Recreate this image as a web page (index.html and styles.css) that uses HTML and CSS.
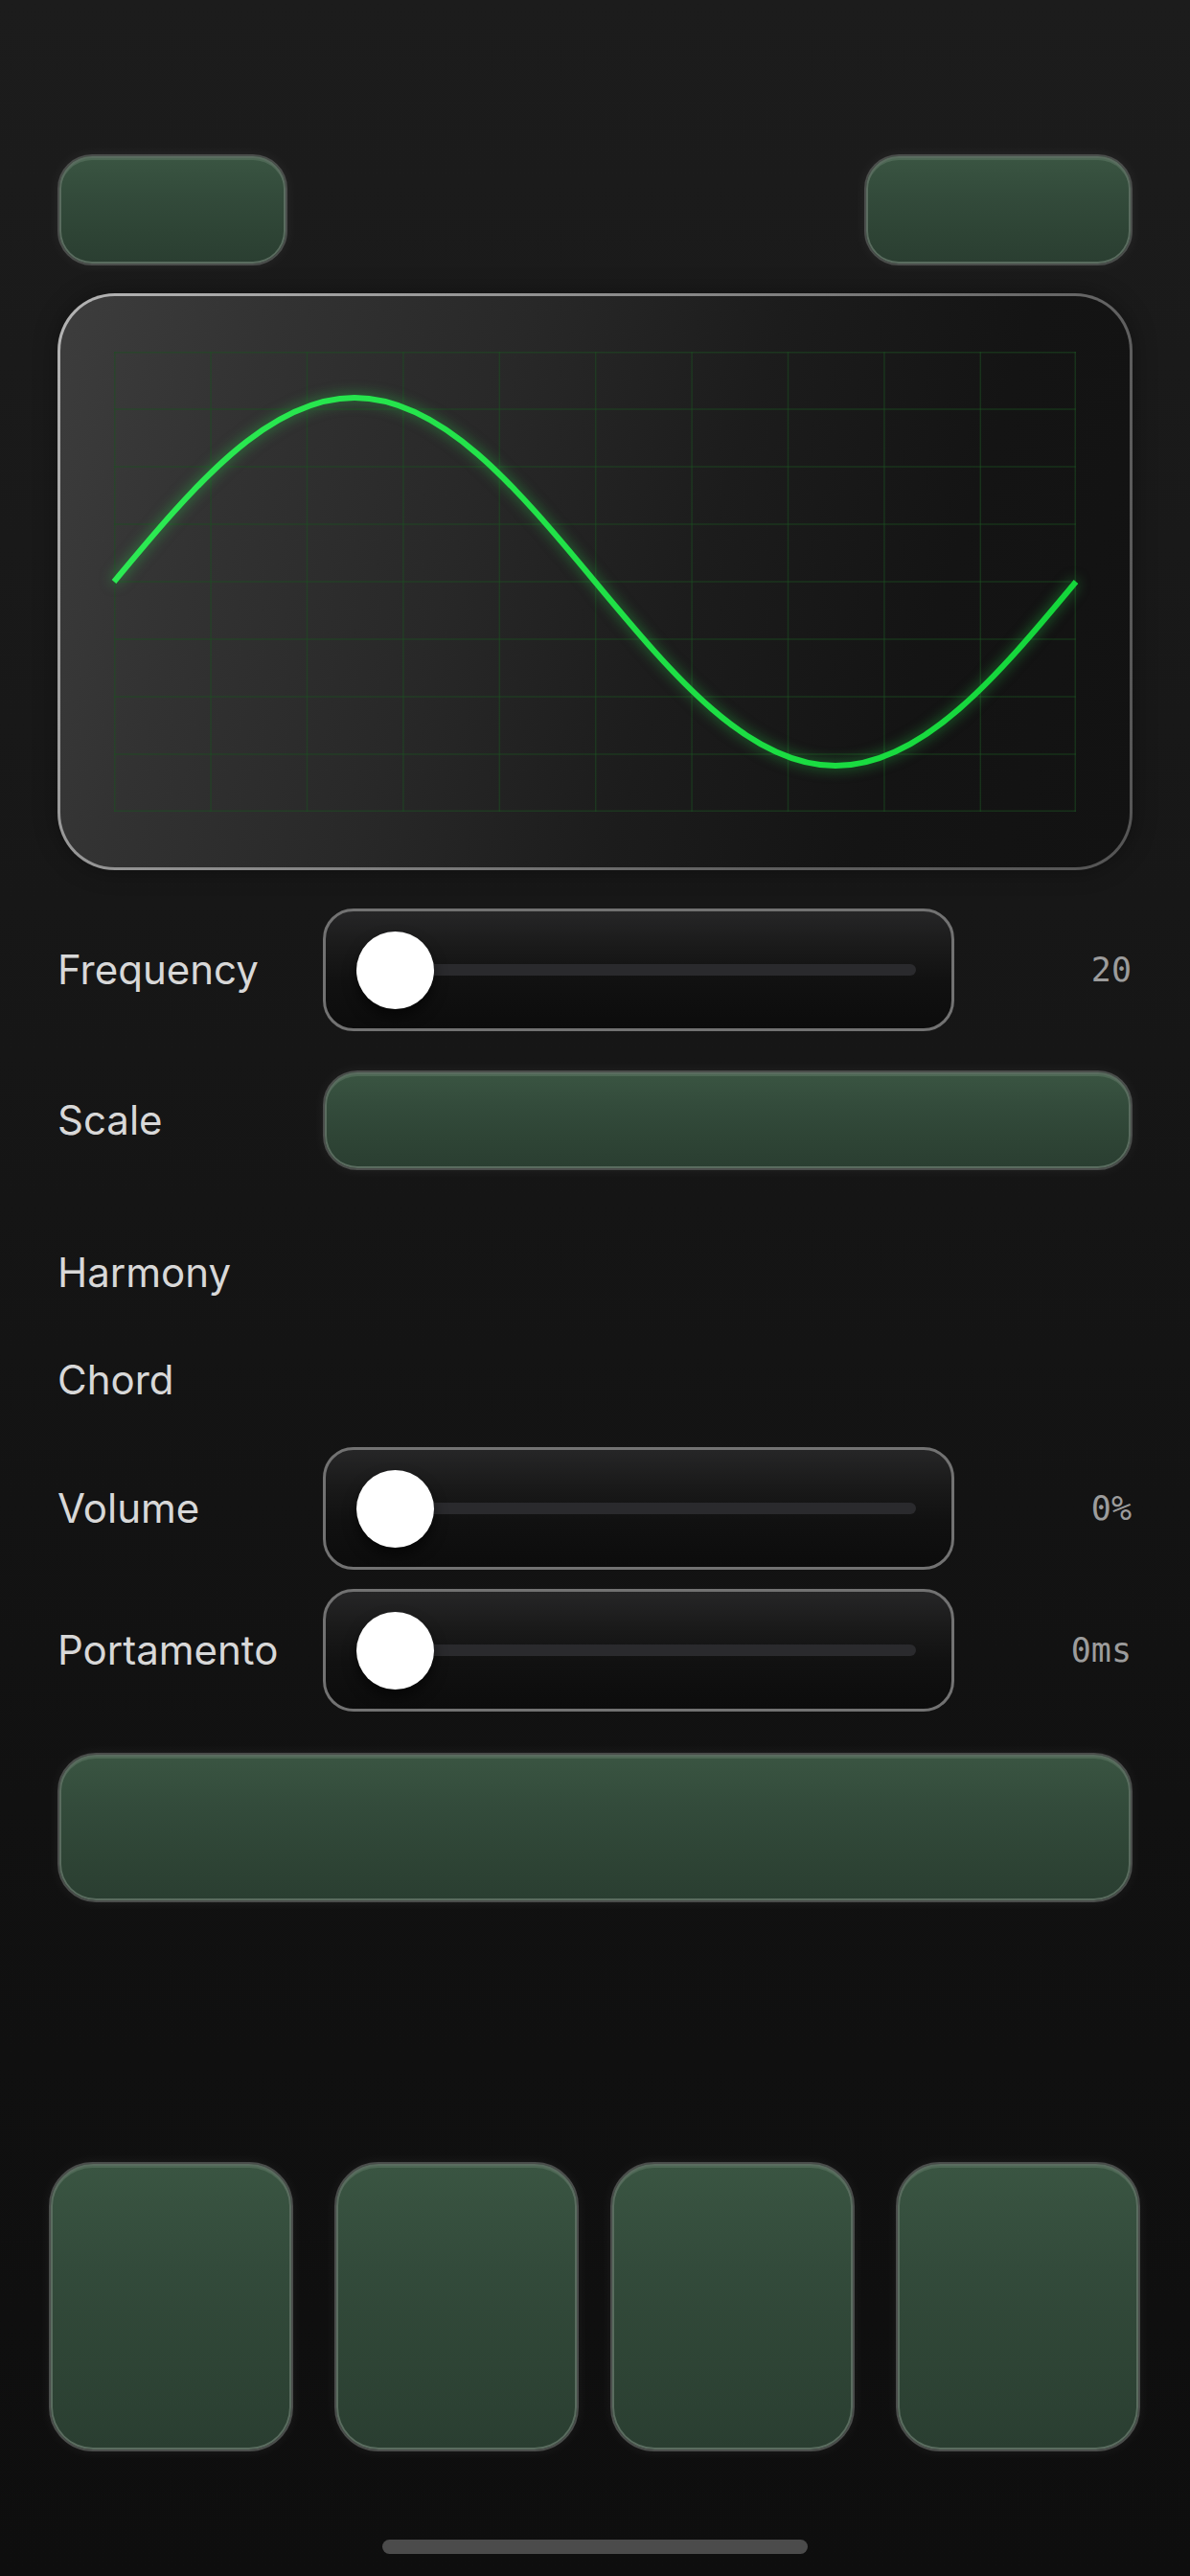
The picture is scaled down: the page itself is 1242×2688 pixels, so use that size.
FILE: index.html
```html
<!DOCTYPE html>
<html lang="en">
<head>
<meta charset="utf-8">
<title>Synth</title>
<link rel="stylesheet" href="styles.css">
</head>
<body>
<div class="app">
  <div class="topbar">
    <div class="gbtn top-left"></div>
    <div class="gbtn top-right"></div>
  </div>

  <div class="scope">
    <svg class="scope-svg" width="1004" height="480" viewBox="0 0 1004 480">
      <defs>
        <linearGradient id="wave" x1="0" y1="0" x2="1" y2="0">
          <stop offset="0" stop-color="#2cea53"/>
          <stop offset="1" stop-color="#14d73b"/>
        </linearGradient>
      </defs>
      <g class="grid">
        <path d="M0.75 0V480M101.1 0V480M201.5 0V480M301.9 0V480M402.3 0V480M502.7 0V480M603.1 0V480M703.5 0V480M803.9 0V480M904.3 0V480M1003.25 0V480"/>
        <path d="M0 0.75H1004M0 60H1004M0 120H1004M0 180H1004M0 240H1004M0 300H1004M0 360H1004M0 420H1004M0 479.25H1004"/>
      </g>
      <path class="wave" d="M0 240 C81.86 141.64 160.16 48 251 48 C341.84 48 420.14 141.64 502 240 C583.86 338.36 662.16 432 753 432 C843.84 432 922.14 338.36 1004 240"/>
    </svg>
  </div>

  <div class="row row-freq">
    <div class="label">Frequency</div>
    <div class="slider"><div class="track"><div class="knob"></div></div></div>
    <div class="value">20</div>
  </div>

  <div class="row row-scale">
    <div class="label">Scale</div>
    <div class="gbtn scale-btn"></div>
  </div>

  <div class="row row-text row-harmony">
    <div class="label">Harmony</div>
  </div>

  <div class="row row-text row-chord">
    <div class="label">Chord</div>
  </div>

  <div class="row row-volume">
    <div class="label">Volume</div>
    <div class="slider"><div class="track"><div class="knob"></div></div></div>
    <div class="value">0%</div>
  </div>

  <div class="row row-porta">
    <div class="label">Portamento</div>
    <div class="slider"><div class="track"><div class="knob"></div></div></div>
    <div class="value">0ms</div>
  </div>

  <div class="gbtn big-btn"></div>

  <div class="pads">
    <div class="pad-group">
      <div class="gbtn pad"></div>
      <div class="gbtn pad"></div>
    </div>
    <div class="pad-group">
      <div class="gbtn pad"></div>
      <div class="gbtn pad"></div>
    </div>
  </div>

  <div class="home-indicator"></div>
</div>
</body>
</html>
```

FILE: styles.css
```css
* { box-sizing: border-box; }

html, body {
  margin: 0;
  padding: 0;
}

body {
  width: 1242px;
  height: 2688px;
  overflow: hidden;
  background: linear-gradient(180deg, #1c1c1c 0%, #171717 35%, #111111 70%, #0e0e0e 100%);
  font-family: Inter, "Noto Sans", "Liberation Sans", sans-serif;
  color: #d8d8d8;
}

.app {
  padding: 161px 60px 0 60px;
  display: flex;
  flex-direction: column;
}

/* green glossy buttons */
.gbtn {
  background: linear-gradient(180deg, #3a5542 0%, #334b3b 35%, #2e4435 70%, #2a3e31 100%);
  border: 2px solid #4a4d4b;
  box-shadow:
    inset 0 0 0 2px #5a6c5f,
    inset 0 3px 0 1px rgba(140, 165, 145, 0.25),
    0 0 14px rgba(255, 255, 255, 0.06);
}

.topbar {
  display: flex;
  justify-content: space-between;
}

.top-left {
  width: 240px;
  height: 116px;
  border-radius: 36px;
}

.top-right {
  width: 280px;
  height: 116px;
  border-radius: 36px;
}

/* scope */
.scope {
  margin-top: 29px;
  width: 1122px;
  padding: 58px 56px;
  border: 3px solid transparent;
  border-radius: 60px;
  background:
    linear-gradient(108deg, #3d3d3d 0%, #323232 18%, #282828 38%, #1c1c1c 58%, #141414 78%, #121212 100%) padding-box,
    linear-gradient(125deg, #b4b4b4 0%, #8a8a8a 40%, #5e5e5e 75%, #555555 100%) border-box;
  box-shadow: 0 0 24px rgba(0, 0, 0, 0.35);
}

.scope-svg {
  display: block;
  overflow: visible;
}

.grid path {
  fill: none;
  stroke: #1b4f22;
  stroke-opacity: 0.5;
  stroke-width: 1.5;
}

.wave {
  fill: none;
  stroke: url(#wave);
  stroke-width: 6;
  stroke-linecap: butt;
  filter: drop-shadow(0 0 7px rgba(40, 225, 80, 0.55));
}

/* rows */
.row {
  display: grid;
  grid-template-columns: 277px 659px 1fr;
  align-items: center;
}

.label {
  font-size: 42px;
  line-height: 48px;
  color: #d8d8d8;
  letter-spacing: 0;
}

.row-freq { margin-top: 40px; }
.row-scale { margin-top: 41px; grid-template-columns: 277px 1fr; }
.row-harmony { margin-top: 83px; }
.row-chord { margin-top: 64px; }
.row-volume { margin-top: 46px; }
.row-porta { margin-top: 20px; }

.slider {
  height: 128px;
  border: 3px solid #727272;
  border-radius: 32px;
  background: linear-gradient(180deg, #262627 0%, #1a1a1a 30%, #111111 60%, #0c0c0c 100%);
  display: flex;
  align-items: center;
  padding: 0 37px 0 32px;
}

.track {
  position: relative;
  flex: 1;
  height: 12px;
  border-radius: 6px;
  background: #2a2a2d;
}

.knob {
  position: absolute;
  left: 0;
  top: 50%;
  width: 81px;
  height: 81px;
  margin-top: -40.5px;
  border-radius: 50%;
  background: #ffffff;
  box-shadow: 0 8px 14px rgba(0, 0, 0, 0.55);
}

.value {
  text-align: right;
  font-family: "DejaVu Sans Mono", "Liberation Mono", monospace;
  font-size: 35px;
  color: #9c9c9c;
  padding-right: 1px;
}

.scale-btn {
  height: 104px;
  border-radius: 36px;
}

.big-btn {
  margin-top: 43px;
  height: 156px;
  border-radius: 40px;
}

/* pads */
.pads {
  margin-top: 271px;
  margin-left: -9px;
  width: 1139px;
  display: flex;
  justify-content: space-between;
}

.pad-group {
  display: flex;
  gap: 43px;
}

.pad {
  width: 255px;
  height: 302px;
  border-radius: 46px;
}

.home-indicator {
  margin: 92px auto 0 auto;
  width: 444px;
  height: 15px;
  border-radius: 8px;
  background: #4b4b4b;
}
```
